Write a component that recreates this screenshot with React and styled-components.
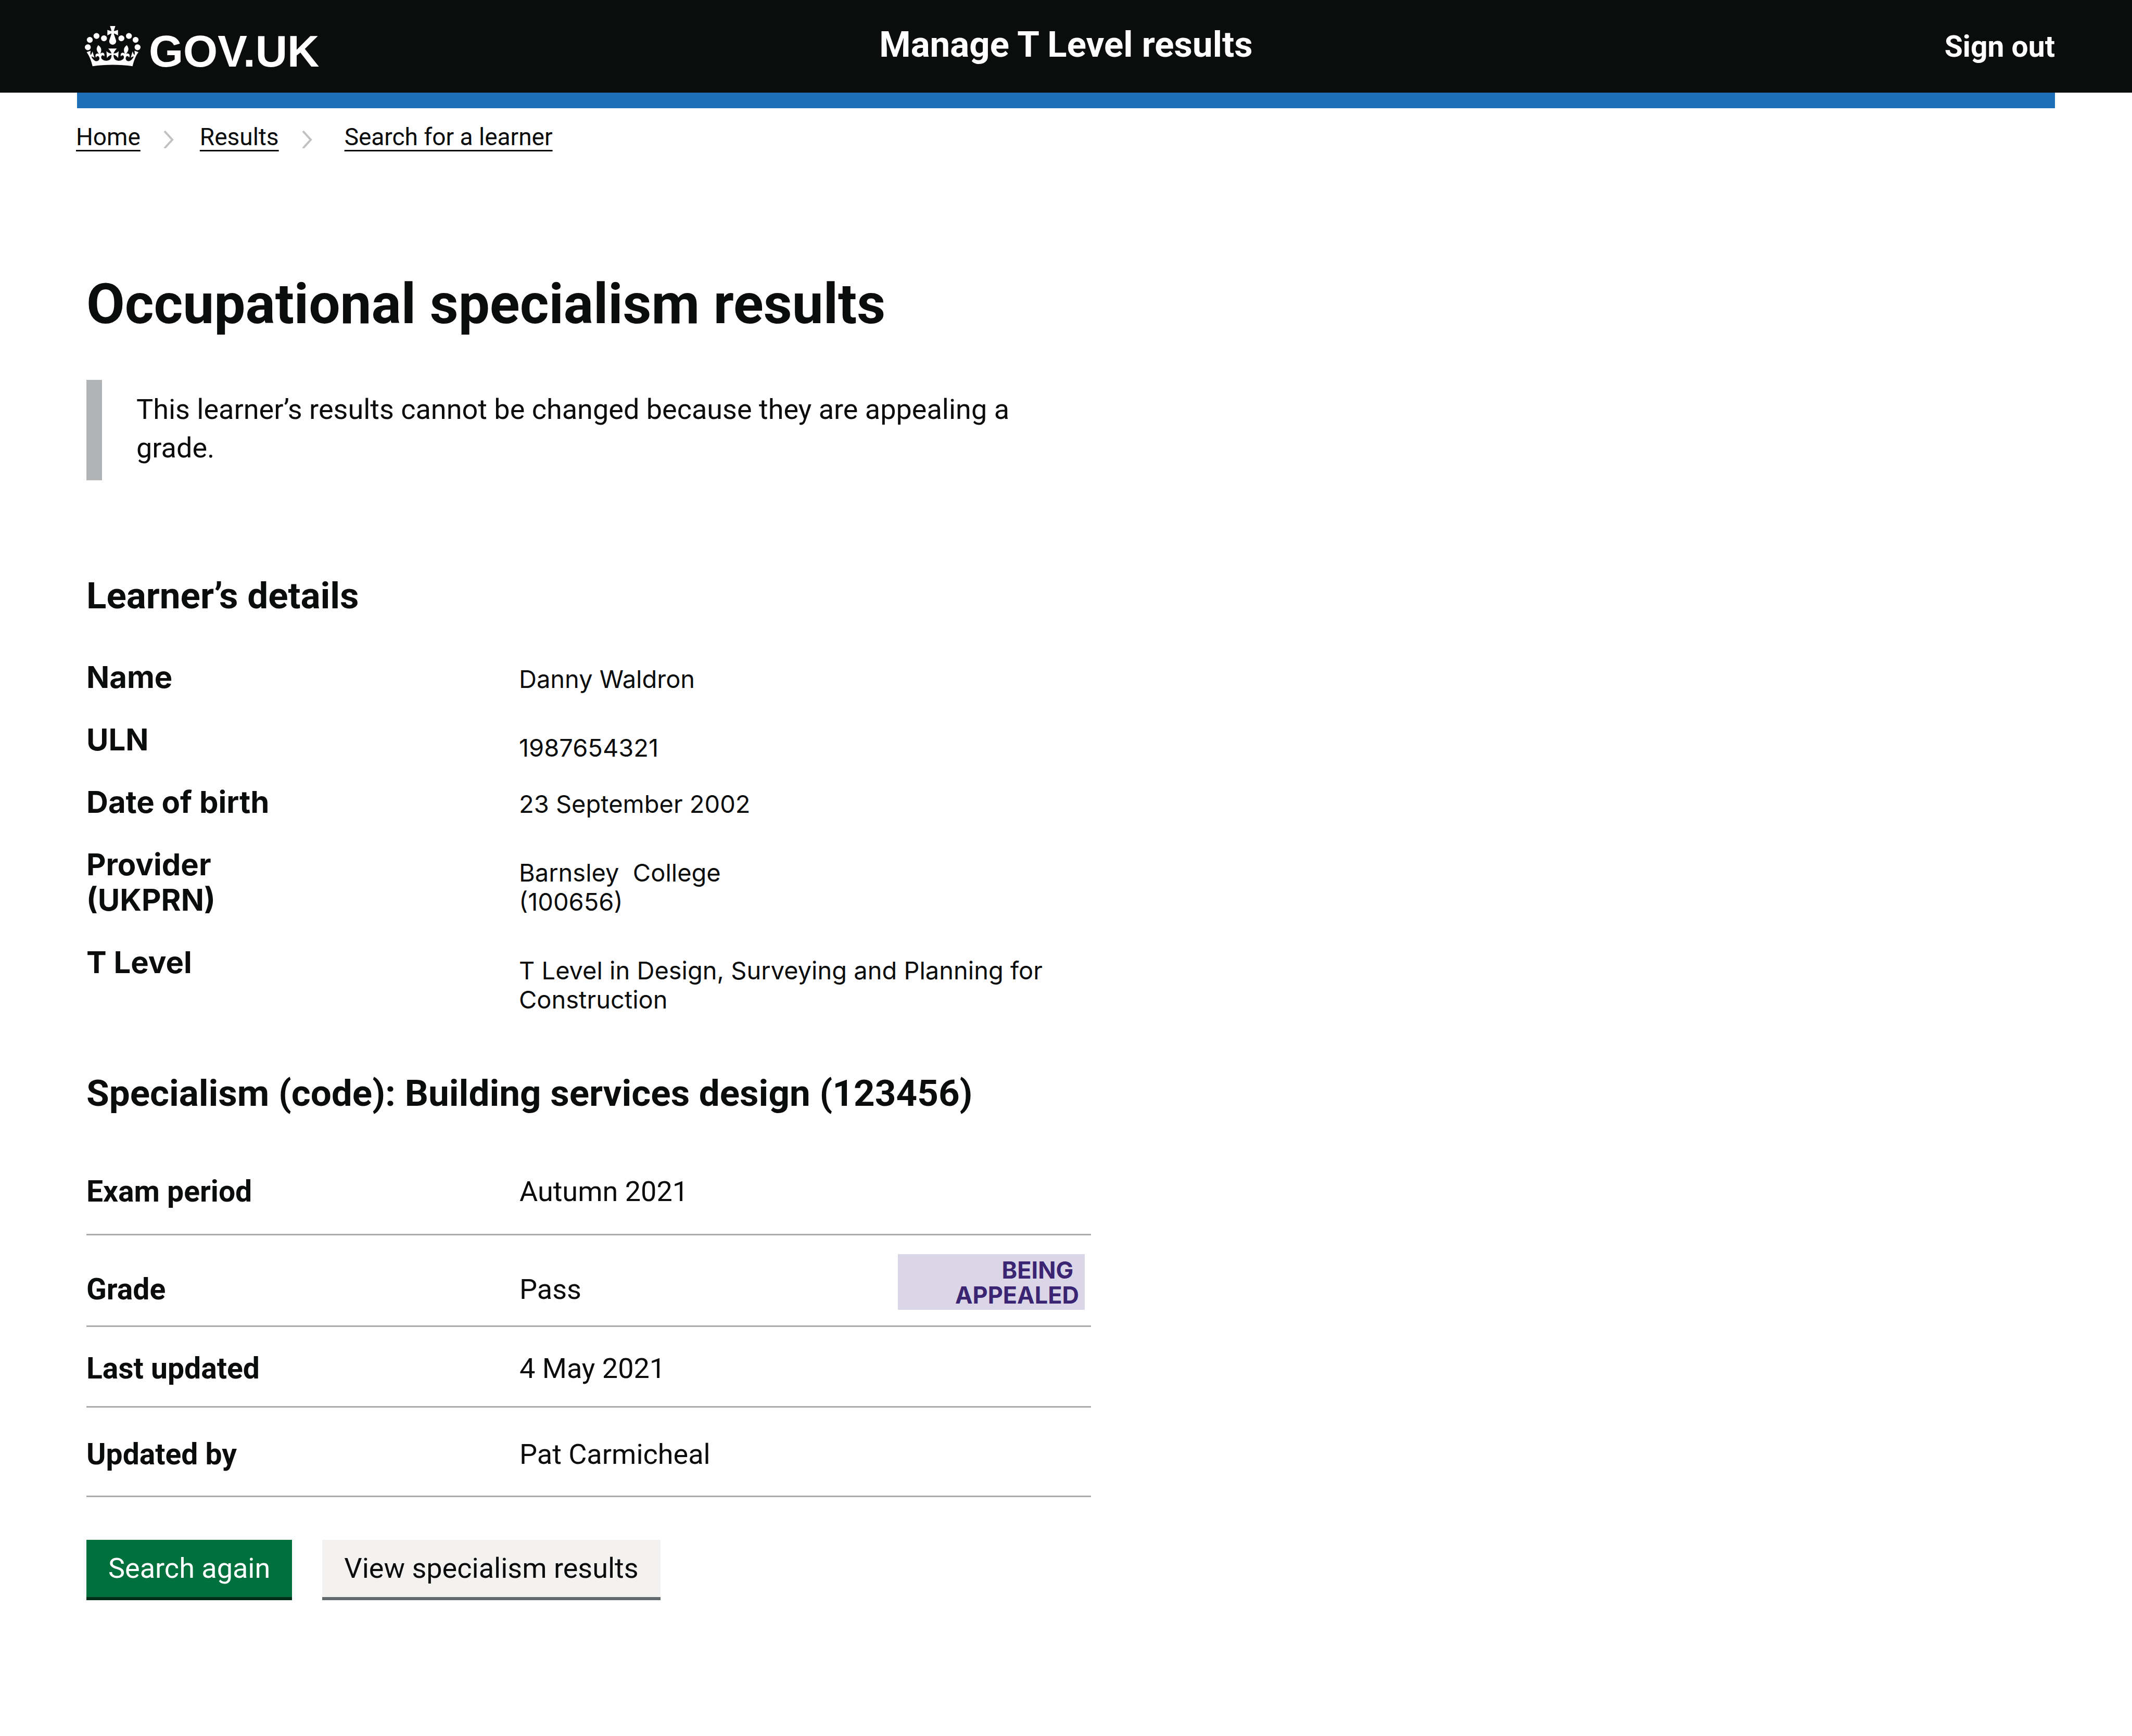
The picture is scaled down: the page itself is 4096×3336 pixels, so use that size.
import React from "react";
import styled, { createGlobalStyle } from "styled-components";

const ink = "#0b0c0c";
const transport = `Roboto, "Liberation Sans", Arial, sans-serif`;
const grotesque = `Inter, "Liberation Sans", Arial, sans-serif`;

const GlobalStyle = createGlobalStyle`
  *, *::before, *::after { box-sizing: border-box; }
  body {
    margin: 0;
    background: #fff;
    color: ${ink};
    font-family: ${transport};
    font-size: 54px;
    line-height: 64px;
  }
  h1, h2, p, dl, dd, ol { margin: 0; padding: 0; }
`;

const Header = styled.header`
  display: grid;
  grid-template-columns: 1fr auto 1fr;
  align-items: baseline;
  min-height: 178px;
  padding: 46px 148px 0;
  background: ${ink};
  color: #fff;
`;

const LogoLink = styled.a`
  display: flex;
  align-items: baseline;
  align-self: start;
  justify-self: start;
  gap: 16px;
  padding: 4px 0 0 15px;
  color: inherit;
  text-decoration: none;
  font: 700 85px/85px "Liberation Sans", Arial, sans-serif;
`;

const Crown = styled.svg`
  width: 107px;
  height: 78px;
  fill: currentColor;
`;

const ServiceName = styled.span`
  font-size: 69px;
  font-weight: 700;
  line-height: 80px;
`;

const SignOut = styled.a`
  justify-self: end;
  color: inherit;
  font-size: 57px;
  font-weight: 700;
  text-decoration: none;
`;

const BlueBar = styled.div`
  height: 30px;
  margin: 0 148px;
  background: #1d70b8;
`;

const Breadcrumbs = styled.nav`
  padding: 28px 146px 0;
  font-size: 46px;
  line-height: 54px;
`;

const CrumbList = styled.ol`
  display: flex;
  list-style: none;
`;

const Crumb = styled.li`
  display: flex;
  align-items: center;
`;

const CrumbLink = styled.a`
  color: inherit;
  text-decoration: underline;
  text-decoration-thickness: 3px;
  text-underline-offset: 9px;
  text-decoration-skip-ink: none;
`;

const Chevron = styled.svg`
  width: 20px;
  height: 44px;
  margin: 0 ${(p) => p.$after}px 0 44px;
  fill: none;
  stroke: #bfc1c3;
  stroke-width: 4;
`;

const Main = styled.main`
  max-width: 2096px;
  padding: 231px 0 120px 166px;
`;

const PageTitle = styled.h1`
  font-size: 107px;
  line-height: 128px;
`;

const Inset = styled.p`
  margin: 81px 0 180px;
  padding: 20px 60px 25px 66px;
  border-left: 30px solid #b1b4b6;
  line-height: 74px;
`;

const SectionTitle = styled.h2`
  margin-bottom: 80px;
  font-size: 71px;
  line-height: 84px;
`;

const Details = styled.dl`
  margin-bottom: 110px;
  font-family: ${grotesque};
`;

const DetailRow = styled.div`
  display: grid;
  grid-template-columns: 831px minmax(0, 1098px);
`;

const DetailKey = styled.dt`
  padding-bottom: 52px;
  font-size: 58px;
  font-weight: 700;
  line-height: 68px;
`;

const DetailValue = styled.dd`
  padding-top: ${(p) => (p.$low ? 22 : 10)}px;
  font-size: 47px;
  line-height: 56px;
  white-space: pre-line;
`;

const Summary = styled.dl`
  margin-bottom: 82px;
`;

const SummaryRow = styled.div`
  display: grid;
  grid-template-columns: 832px 1fr auto;
  border-bottom: 3px solid #ababab;

  dt, dd { padding: ${(p) => p.$top}px 0 ${(p) => p.$bottom}px; }
`;

const SummaryKey = styled.dt`
  font-size: 57px;
  font-weight: 700;
`;

const SummaryValue = styled.dd``;

const Tag = styled.strong`
  align-self: start;
  width: 359px;
  margin: 36px 12px 0 0;
  padding: 7px 11px 4px;
  background: #dad6e7;
  color: #3b2573;
  font: 700 45px/48px ${grotesque};
  text-align: right;
  white-space: pre-line;
`;

const Actions = styled.div`
  display: flex;
  gap: 58px;
`;

const Button = styled.button`
  padding: 23px 42px;
  border: 0;
  border-bottom: 6px solid ${(p) => (p.$secondary ? "#626a6e" : "#002d18")};
  background: ${(p) => (p.$secondary ? "#f3f2f1" : "#00703c")};
  color: ${(p) => (p.$secondary ? ink : "#fff")};
  font: inherit;
`;

const crumbs = [
  { label: "Home", after: 50 },
  { label: "Results", after: 62 },
  { label: "Search for a learner" },
];

const details = [
  { key: "Name", value: "Danny Waldron" },
  { key: "ULN", value: "1987654321", low: true },
  { key: "Date of birth", value: "23 September 2002" },
  { key: <>Provider<br />(UKPRN)</>, value: "Barnsley \u00a0College\n(100656)", low: true },
  { key: "T Level", value: "T Level in Design, Surveying and Planning for Construction", low: true },
];

const summary = [
  { key: "Exam period", value: "Autumn 2021", top: 35, bottom: 49 },
  { key: "Grade", value: "Pass", top: 72, bottom: 37, tag: "BEING\u00a0\nAPPEALED" },
  { key: "Last updated", value: "4 May 2021", top: 48, bottom: 40 },
  { key: "Updated by", value: "Pat Carmicheal", top: 58, bottom: 47 },
];

function CrownIcon() {
  return (
    <Crown viewBox="0 0 132 97" preserveAspectRatio="none" aria-hidden="true">
      <path
        fillRule="evenodd"
        d="M25 30.2c3.5 1.5 7.7-.2 9.1-3.7 1.5-3.6-.2-7.8-3.9-9.2-3.6-1.4-7.6.3-9.1 3.9-1.4 3.5.3 7.5 3.9 9zM9 39.5c3.6 1.5 7.8-.2 9.2-3.7 1.5-3.6-.2-7.8-3.9-9.1-3.6-1.5-7.6.2-9.1 3.8-1.4 3.5.3 7.5 3.8 9zM4.4 57.2c3.5 1.5 7.7-.2 9.1-3.8 1.5-3.6-.2-7.7-3.9-9.1-3.5-1.5-7.6.3-9.1 3.8-1.4 3.5.3 7.6 3.9 9.1zm38.3-21.4c3.5 1.5 7.7-.2 9.1-3.8 1.5-3.6-.2-7.7-3.9-9.1-3.6-1.5-7.6.3-9.1 3.8-1.3 3.6.4 7.7 3.9 9.1zm64.4-5.6c-3.6 1.5-7.8-.2-9.1-3.7-1.5-3.6.2-7.8 3.8-9.2 3.6-1.4 7.7.3 9.2 3.9 1.3 3.5-.4 7.5-3.9 9zm15.9 9.3c-3.6 1.5-7.7-.2-9.1-3.7-1.5-3.6.2-7.8 3.7-9.1 3.6-1.5 7.7.2 9.2 3.8 1.5 3.5-.3 7.5-3.8 9zm4.7 17.7c-3.6 1.5-7.8-.2-9.2-3.8-1.5-3.6.2-7.7 3.9-9.1 3.6-1.5 7.7.3 9.2 3.8 1.3 3.5-.4 7.6-3.9 9.1zM89.3 35.8c-3.6 1.5-7.8-.2-9.2-3.8-1.4-3.6.2-7.7 3.9-9.1 3.6-1.5 7.7.3 9.2 3.8 1.4 3.6-.3 7.7-3.9 9.1zM69.7 17.7l8.9 4.7V9.3l-8.9 2.8c-.2-.3-.5-.6-.9-.9L72.4 0H59.6l3.5 11.2c-.3.3-.6.5-.9.9l-8.8-2.8v13.1l8.8-4.7c.3.3.6.7.9.9l-5 15.4v.1c-.2.8-.4 1.6-.4 2.4 0 4.1 3.1 7.5 7 8.1h.2c.3 0 .7.1 1 .1.4 0 .7 0 1-.1h.2c4-.6 7.1-4.1 7.1-8.1 0-.8-.1-1.7-.4-2.4V34l-5.1-15.4c.4-.2.7-.6 1-.9zM66 92.8c16.9 0 32.8 1.1 47.1 3.2 4-16.9 8.9-26.7 14-33.5l-9.6-3.4c1 4.9 1.1 7.2 0 10.2-1.5-1.4-3-4.3-4.2-8.7L108.6 76c2.8-2 5-3.2 7.5-3.3-4.4 9.4-10 11.9-13.6 11.2-4.3-.8-6.3-4.6-5.6-7.9 1-4.7 5.7-5.9 8-.5 4.3-8.7-3-11.4-7.6-8.8 7.1-7.2 7.9-13.5 2.1-21.1-8 6.1-8.1 12.3-4.5 20.8-4.7-5.4-12.1-2.5-9.5 6.2 3.4-5.2 7.9-2 7.2 3.1-.6 4.3-6.4 7.8-13.5 7.2-10.3-.9-10.9-8-11.2-13.8 2.5-.5 7.1 1.8 11 7.3L80.2 60c-4.1 4.4-8 5.3-12.3 5.4 1.4-4.4 8-11.6 8-11.6H55.5s6.4 7.2 7.9 11.6c-4.2-.1-8-1-12.3-5.4l1.4 16.4c3.9-5.5 8.5-7.7 10.9-7.3-.3 5.8-.9 12.8-11.1 13.8-7.2.6-12.9-2.9-13.5-7.2-.7-5 3.8-8.3 7.1-3.1 2.7-8.7-4.6-11.6-9.4-6.2 3.7-8.5 3.6-14.7-4.6-20.8-5.8 7.6-5 13.9 2.2 21.1-4.7-2.6-11.9.1-7.7 8.8 2.3-5.5 7.1-4.2 8.1.5.7 3.3-1.3 7.1-5.7 7.9-3.5.7-9-1.8-13.5-11.2 2.5.1 4.7 1.3 7.5 3.3l-4.7-15.4c-1.2 4.4-2.7 7.2-4.3 8.7-1.1-3-.9-5.3 0-10.2l-9.5 3.4c5 6.9 9.9 16.7 14 33.5 14.8-2.1 30.8-3.2 47.7-3.2z"
      />
    </Crown>
  );
}

export default function App() {
  return (
    <>
      <GlobalStyle />
      <Header>
        <LogoLink href="#">
          <CrownIcon />
          GOV.UK
        </LogoLink>
        <ServiceName>Manage T Level results</ServiceName>
        <SignOut href="#">Sign out</SignOut>
      </Header>
      <BlueBar />
      <Breadcrumbs aria-label="Breadcrumb">
        <CrumbList>
          {crumbs.map((crumb) => (
            <Crumb key={crumb.label}>
              <CrumbLink href="#">{crumb.label}</CrumbLink>
              {crumb.after && (
                <Chevron $after={crumb.after} viewBox="0 0 20 44" aria-hidden="true">
                  <path d="M2 11L17 27.500L2 44" />
                </Chevron>
              )}
            </Crumb>
          ))}
        </CrumbList>
      </Breadcrumbs>
      <Main>
        <PageTitle>Occupational specialism results</PageTitle>
        <Inset>
          This learner’s results cannot be changed because they are appealing a grade.
        </Inset>

        <SectionTitle>Learner’s details</SectionTitle>
        <Details>
          {details.map((row, i) => (
            <DetailRow key={i}>
              <DetailKey>{row.key}</DetailKey>
              <DetailValue $low={row.low}>{row.value}</DetailValue>
            </DetailRow>
          ))}
        </Details>

        <SectionTitle>Specialism (code): Building services design (123456)</SectionTitle>
        <Summary>
          {summary.map((row) => (
            <SummaryRow key={row.key} $top={row.top} $bottom={row.bottom}>
              <SummaryKey>{row.key}</SummaryKey>
              <SummaryValue>{row.value}</SummaryValue>
              {row.tag && <Tag>{row.tag}</Tag>}
            </SummaryRow>
          ))}
        </Summary>

        <Actions>
          <Button type="button">Search again</Button>
          <Button type="button" $secondary>View specialism results</Button>
        </Actions>
      </Main>
    </>
  );
}
